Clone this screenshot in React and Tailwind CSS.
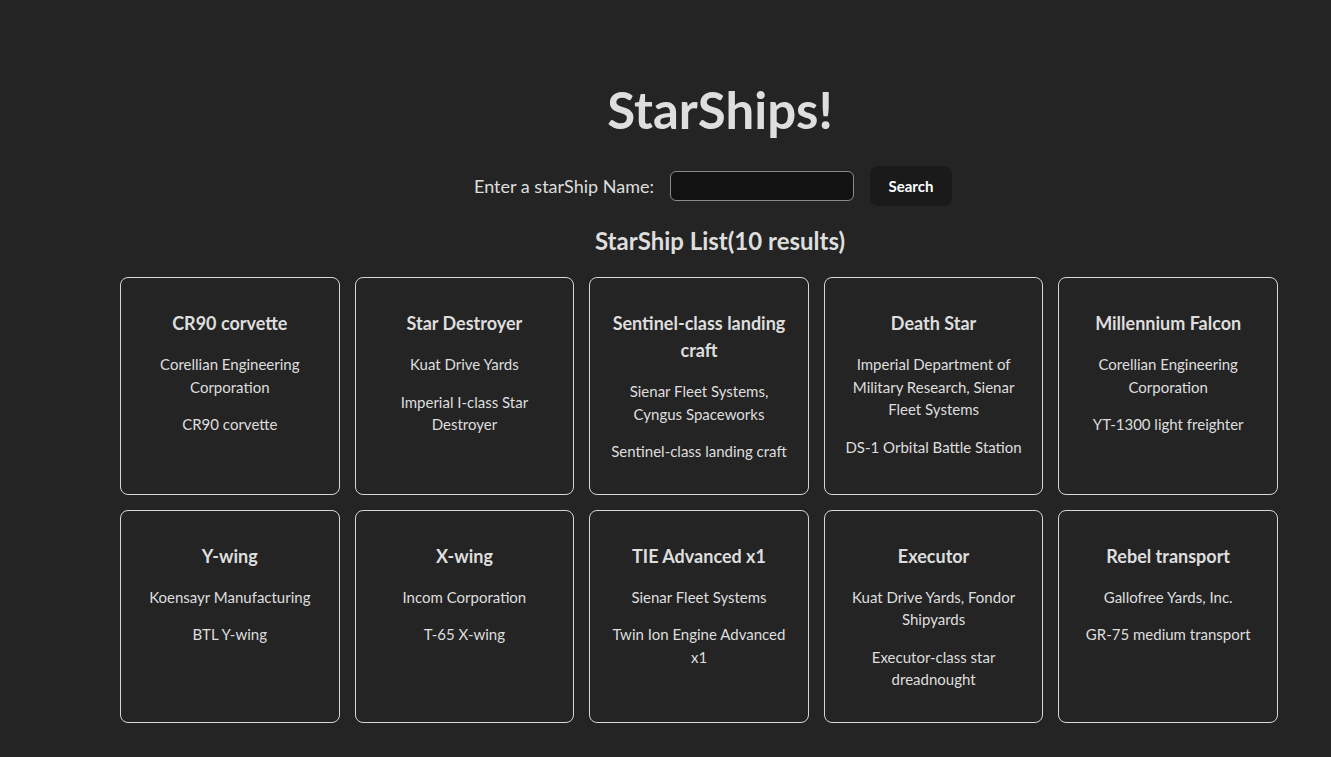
import { useState } from 'react';

const ships = [
    { name: 'CR90 corvette', maker: 'Corellian Engineering Corporation', model: 'CR90 corvette' },
    { name: 'Star Destroyer', maker: 'Kuat Drive Yards', model: 'Imperial I-class Star Destroyer' },
    { name: 'Sentinel-class landing craft', maker: 'Sienar Fleet Systems, Cyngus Spaceworks', model: 'Sentinel-class landing craft' },
    { name: 'Death Star', maker: 'Imperial Department of Military Research, Sienar Fleet Systems', model: 'DS-1 Orbital Battle Station' },
    { name: 'Millennium Falcon', maker: 'Corellian Engineering Corporation', model: 'YT-1300 light freighter' },
    { name: 'Y-wing', maker: 'Koensayr Manufacturing', model: 'BTL Y-wing' },
    { name: 'X-wing', maker: 'Incom Corporation', model: 'T-65 X-wing' },
    { name: 'TIE Advanced x1', maker: 'Sienar Fleet Systems', model: 'Twin Ion Engine Advanced x1' },
    { name: 'Executor', maker: 'Kuat Drive Yards, Fondor Shipyards', model: 'Executor-class star dreadnought' },
    { name: 'Rebel transport', maker: 'Gallofree Yards, Inc.', model: 'GR-75 medium transport' },
];

// single starship card
function ShipCard({ ship }) {
    return (
        <div className="border border-[#d6d6d6] rounded-lg px-4 pt-[32px] pb-[31px] text-center">
            <h3 className="text-[18px] leading-[27px] font-bold mb-[16px]">{ship.name}</h3>
            <p className="text-[15px] leading-[22.5px] mb-[15px]">{ship.maker}</p>
            <p className="text-[15px] leading-[22.5px]">{ship.model}</p>
        </div>
    );
}

export default function App() {
    const [query, setQuery] = useState('');

    return (
        <div
            className="min-h-screen bg-[#242424] text-[#dedede] pl-[109px] pt-[82px] pb-[35px]"
            style={{ fontFamily: 'Lato, "Open Sans", sans-serif' }}
        >
            <div className="text-center">
                <h1 className="text-[51px] leading-[56px] font-bold">StarShips!</h1>

                <div className="flex items-center justify-center gap-4 mt-[28px] ml-[-14px]">
                    <label className="text-[18px]">Enter a starShip Name:</label>
                    <input
                        value={query}
                        onChange={(e) => setQuery(e.target.value)}
                        className="w-[184px] h-[30px] bg-[#121212] border border-[#8a8a8a] rounded-md px-2 text-[14px] outline-none"
                    />
                    <button className="w-[82px] h-[40px] bg-[#1a1a1a] rounded-lg text-[15px] font-bold text-white">
                        Search
                    </button>
                </div>

                <h2 className="text-[24px] leading-[30px] font-bold mt-[20px]">StarShip List(10 results)</h2>
            </div>

            <div className="grid grid-cols-5 gap-[15px] w-[1158px] ml-[11px] mt-[21px]">
                {ships.map((s) => (
                    <ShipCard key={s.name} ship={s} />
                ))}
            </div>
        </div>
    );
}
